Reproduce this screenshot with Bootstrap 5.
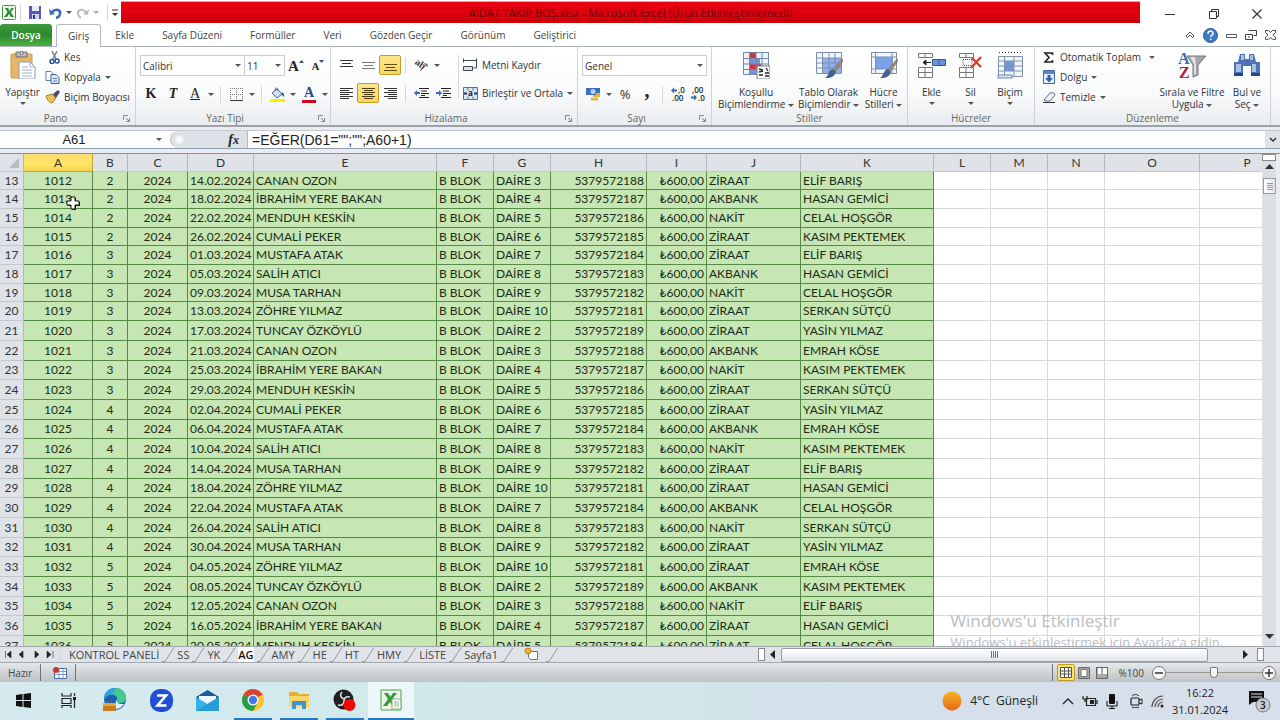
<!DOCTYPE html>
<html lang="tr">
<head>
<meta charset="utf-8">
<meta name="viewport" content="width=device-width, initial-scale=1">
<title>AİDAT TAKİP BOŞ.xlsx - Microsoft Excel</title>
<link href="https://cdn.jsdelivr.net/npm/bootstrap@5.3.0/dist/css/bootstrap.min.css" rel="stylesheet">
<style>
:root { --ui: "Open Sans", "Noto Sans", sans-serif; --sheet: Lato, "Noto Sans", sans-serif; }
body { font-family: var(--ui); font-size: 10px; line-height: 12px; color: #333; background: #fff; }
button, select, input { font: inherit; color: inherit; }
button { background: none; border: 0; padding: 0; }
svg { display: block; flex: none; }
.dd { display: inline-block; width: 0; height: 0; border: 3px solid transparent; border-top-color: #555; border-bottom: 0; vertical-align: middle; flex: none; }

/* title bar */
.titlebar { height: 24px; padding-top: 1px; }
.quick { width: 121px; padding-left: 2px; }
.titlebox { height: 22px; background: linear-gradient(#e8000f, #e00010 50%, #c80006); border-top: 1px solid #f3a0a5; color: #6d0008; font-size: 11px; }
.winbtns { width: 140px; padding: 2px 18px 0 24px; }

/* ribbon tabs */
.ribtabs { height: 23px; border-bottom: 1px solid #aeb4bb; }
.ribtabs a { color: #444; text-decoration: none; padding: 0 14px; height: 22px; line-height: 22px; }
.ribtabs a.filetab { background: linear-gradient(#3f9a3f, #2a8a2c 50%, #4bb045); color: #fff; font-weight: 600; width: 52px; padding: 0; text-align: center; border-radius: 3px 3px 0 0; margin-right: 4px; }
.ribtabs a.current { border: 1px solid #b6babf; border-bottom: 0; border-radius: 3px 3px 0 0; height: 23px; background: #fff; padding: 0 11px; }

/* ribbon */
.ribbon { display: grid; grid-template-columns: 136fr 195fr 247fr 134fr 196fr 127fr 236fr 9fr; height: 80px; background: linear-gradient(#fff, #fafbfc 55%, #e9edf0); border-bottom: 2px solid #9da2a8; }
.ribgroup { border-right: 1px solid #cfd3d7; height: 78px; min-width: 0; }
.ribbody { height: 65px; }
.riblabel { height: 13px; line-height: 13px; color: #666; position: relative; text-align: center; }
.launch { position: absolute; right: 5px; top: 3px; }
.big { width: 56px; padding-top: 4px; text-align: center; white-space: nowrap; display: flex; flex-direction: column; align-items: center; }
.big svg { margin-bottom: 7px; }
.smallcmd { display: flex; align-items: center; gap: 4px; height: 20px; white-space: nowrap; }
.ico { width: 22px; height: 20px; display: flex; align-items: center; justify-content: center; flex: none; }
.ico.on { background: linear-gradient(#fde58c, #fbd75a); border: 1px solid #c29b29; border-radius: 2px; }
.arrowbtn { width: 10px; height: 20px; display: flex; align-items: center; justify-content: center; flex: none; }
.vsep { width: 1px; height: 17px; background: #d5d8db; flex: none; }
.combo { height: 21px; border: 1px solid #c9cdd2; background: #fff url("data:image/svg+xml,%3Csvg xmlns='http://www.w3.org/2000/svg' width='6' height='3'%3E%3Cpath d='M0 0h6L3 3z' fill='%23555'/%3E%3C/svg%3E") no-repeat right 3px center; appearance: none; padding: 0 2px; border-radius: 0; }
.serif { font-family: "Liberation Serif", serif; font-weight: 700; font-size: 14px; color: #222; }

/* formula bar */
.formula { height: 26px; background: #e9edf1; padding: 3px 0 4px; }
.formula .strip { height: 19px; border-bottom: 1px solid #8fa1b0; border-top: 1px solid #c4c9cf; background: #fff; }
.formula input { border: 0; background: #fff; font-family: "Liberation Sans", Arial, sans-serif; font-size: 14px; color: #222; height: 17px; padding: 0; outline: 0; }
.formula input.namebox { font-size: 13px; width: 148px; }
.fxbox { width: 78px; background: #dde1e6; border: 1px solid #b5bac0; border-width: 0 1px 0 1px; border-radius: 9px 0 0 9px; height: 17px; }

/* sheet */
.sheetwrap { min-height: 0; border-top: 1px solid #8b9097; background: #dfe3e8; }
.gridview { position: relative; overflow: hidden; background: #fff; min-width: 0; }
.cells { table-layout: fixed; width: 1295px; border-collapse: separate; border-spacing: 0; font-family: var(--sheet); font-size: 12px; line-height: 16px; color: #1d2b17; }
.cells th { font-weight: 400; text-align: center; background: #dfe3e8; color: #333; border-right: 1px solid #b3b8be; border-bottom: 1px solid #c3c8ce; padding: 0; }
.cells thead th { height: 18px; }
.cells thead th.sel { background: linear-gradient(#f9dc74, #ffe566 60%, #f7d14f); border-color: #c8a136; }
.cells td { padding: 0 2px; border-right: 1px solid #d6d8da; border-bottom: 1px solid #d6d8da; white-space: nowrap; overflow: hidden; }
.cells td.fill { background: #c6e6b3; border-color: #558b46; }
.cells tbody tr { height: 19px; }
.cells tbody tr:nth-child(3n+1) { height: 18px; }
.cells tbody tr:nth-child(n+9) { height: 20px; }
.cells tbody tr:nth-child(3n+11) { height: 19px; }
.cells td.hascursor { position: relative; overflow: visible; }
.hascursor svg { position: absolute; left: 42px; top: 6px; }
.watermark { position: absolute; right: 32px; bottom: -5px; width: 280px; color: #b4b7b9; opacity: .9; white-space: nowrap; pointer-events: none; }
.watermark .wm1 { font-size: 17px; line-height: 24px; }
.watermark .wm2 { font-size: 13px; line-height: 18px; }
.vscroll { width: 18px; background: #dbe0e5; border-right: 4px solid #e9edf1; }
.vthumb { width: 13px; height: 16px; border: 1px solid #969ca3; background: linear-gradient(90deg, #fff, #e3e6ea); }

/* sheet tabs */
.sheettabs { height: 17px; background: #e0e4e9; border-top: 1px solid #a3a8ae; border-bottom: 1px solid #a3a8ae; font-size: 11px; color: #444; }
.sheettabs a { color: #444; text-decoration: none; line-height: 15px; height: 15px; white-space: nowrap; }
.sheettabs a.current { background: #fff; color: #111; font-weight: 600; }
.hscroll { width: 522px; height: 15px; }
.hthumb { width: 427px; height: 14px; border: 1px solid #969ca3; background: linear-gradient(#fff, #e3e6ea); border-radius: 2px; }
.splitgrip { width: 7px; height: 13px; border: 1px solid #888; background: #fff; }

/* status bar */
.status { height: 19px; background: linear-gradient(#e6e9eb, #d3d6d9 45%, #bfc3c6); color: #444; }
.status .on { background: #fbdf72; border: 1px solid #c49a2b; border-radius: 2px; }
.zoom { appearance: none; width: 96px; height: 15px; background: linear-gradient(#999, #999) no-repeat center / 100% 1px; }
.zoom::-webkit-slider-thumb { appearance: none; width: 8px; height: 11px; background: #f6f6f6; border: 1px solid #777; border-radius: 1px 1px 4px 4px; }
.round { width: 14px; height: 14px; border: 1px solid #777; border-radius: 50%; background: #f7f7f7; display: flex; align-items: center; justify-content: center; }

/* taskbar */
.taskbar { height: 38px; background: linear-gradient(90deg, #d4eaef, #d2e9ec 35%, #d4e0ea 70%, #d7dfeb); color: #222; }
.app { width: 46px; height: 38px; display: flex; align-items: center; justify-content: center; border-bottom: 2px solid transparent; position: relative; }
.app.open::after { content: ""; position: absolute; left: 4px; right: 4px; bottom: -2px; height: 2px; background: #2478c0; }
.app.front { background: #edf6f8; }
.app.front::after { left: 0; right: 0; }
.weather { font-size: 12px; }
.clock { width: 64px; font-size: 11px; line-height: 17px; text-align: center; }
</style>
</head>
<body class="d-flex flex-column vh-100 overflow-hidden">

<header>
  <div class="titlebar d-flex">
    <div class="quick d-flex align-items-center">
      <svg width="14" height="15" viewBox="0 0 14 15"><rect x=".5" y=".5" width="13" height="14" rx="1" fill="#eaf6e6" stroke="#3d9a43"/><path d="M3 3h3l1.500 3L9.500 3H12L8.800 7.300 12 12H9L7 9l-2 3H2l3.500-4.700z" fill="#2b8a33"/></svg>
      <span class="vsep ms-1 me-2"></span>
      <button aria-label="Kaydet"><svg width="12" height="13" viewBox="0 0 12 13"><path d="M0 0h12v13H0z" fill="#5a57b5"/><path d="M3 0h7v5H3z" fill="#e9eefa"/><path d="M3 8h7v5H3z" fill="#cfd6ef"/><path d="M4 9h2v4H4z" fill="#34318c"/></svg></button>
      <button class="ms-2" aria-label="Geri Al"><svg width="13" height="12" viewBox="0 0 13 12"><path d="M3 5c4-4 9-2 8 2-.4 2-2 3.500-4 4" fill="none" stroke="#3767b5" stroke-width="2.500"/><path d="M0 2l1 6 5-1z" fill="#3767b5"/></svg></button>
      <span class="dd ms-1 me-1"></span>
      <button aria-label="Yinele"><svg width="13" height="12" viewBox="0 0 13 12"><path d="M10 5C6 1 1 3 2 7c.4 2 2 3.500 3 4" fill="none" stroke="#b9bdc2" stroke-width="2"/><path d="M13 2l-1 6-5-1z" fill="#b9bdc2"/></svg></button>
      <span class="dd ms-1 me-2 opacity-50"></span>
      <span class="vsep me-1"></span>
      <svg width="6" height="8"><path d="M0 1h6" stroke="#333"/><path d="M0 4h6L3 7z" fill="#333"/></svg>
    </div>
    <div class="titlebox flex-grow-1 d-flex align-items-center justify-content-center"><span>AİDAT TAKİP BOŞ.xlsx - Microsoft Excel (Ürün Etkinleştirilemedi)</span></div>
    <div class="winbtns d-flex justify-content-between align-items-center">
      <button aria-label="Simge durumu"><svg width="12" height="10"><path d="M1 5.500h10" stroke="#333"/></svg></button>
      <button aria-label="Geri yükle"><svg width="10" height="10"><path d="M.5 2.500h7v7h-7zM2.500 2.500v-2h7v7h-2" fill="none" stroke="#333"/></svg></button>
      <button aria-label="Kapat"><svg width="10" height="10"><path d="M.5.500l9 9m0-9l-9 9" stroke="#333" stroke-width="1.200"/></svg></button>
    </div>
  </div>

  <nav class="ribtabs d-flex">
    <a href="#" class="filetab">Dosya</a>
    <a href="#" class="current">Giriş</a>
    <a href="#">Ekle</a><a href="#">Sayfa Düzeni</a><a href="#">Formüller</a><a href="#">Veri</a><a href="#">Gözden Geçir</a><a href="#">Görünüm</a><a href="#">Geliştirici</a>
    <div class="ms-auto d-flex align-items-center gap-2 pe-1">
      <svg width="10" height="8" viewBox="0 0 10 8"><path d="M1 5l4-4 4 4-1.500 1.500L5 4 2.500 6.500z" fill="#fff" stroke="#555"/></svg>
      <svg width="15" height="15" viewBox="0 0 15 15"><circle cx="7.500" cy="7.500" r="7" fill="#3f79c4" stroke="#2a5a9c"/><path d="M5 6c0-4 5-3.500 5-.6 0 1.700-2.300 1.800-2.300 3.600M7.700 10.500v1.600" fill="none" stroke="#fff" stroke-width="1.500"/></svg>
      <svg width="11" height="8"><path d="M.5 3.500h10v3H.5z" fill="#fff" stroke="#555"/></svg>
      <svg width="12" height="11"><path d="M3.500.500h8v5h-3M.5 4.500h7v5h-7zM3 7h2" fill="none" stroke="#444"/></svg>
      <svg width="11" height="10"><path d="M.5.500h3l2 2 2-2h3v2L8 4.800l2.500 2.500v2h-3l-2-2-2 2h-3v-2L3 4.800.5 2.500z" fill="#fff" stroke="#444"/></svg>
    </div>
  </nav>

  <div class="ribbon">
    <section class="ribgroup">
      <div class="ribbody d-flex">
        <button class="big" style="width:45px">
          <svg width="26" height="28" viewBox="0 0 26 28"><rect x="1" y="3" width="21" height="24" rx="1" fill="#e6b866" stroke="#c99a4a"/><path d="M6 1h11v5H6z" fill="#b9babd" stroke="#6c6f73"/><circle cx="11.500" cy="2" r="1.500" fill="#fff" stroke="#666"/><path d="M9 11h11l5 5v12H9z" fill="#fff" stroke="#8c9cb5"/><path d="M20 11v5h5M12 16h6M12 19h10M12 22h10M12 25h10" fill="none" stroke="#9fb2cf"/></svg>
          <span>Yapıştır</span><span class="dd mt-1"></span></button>
        <div>
          <button class="smallcmd"><svg class="ms-1" width="11" height="13" viewBox="0 0 11 13"><path d="M3 0l4 8M8 0L4 8" stroke="#6d7f9d" stroke-width="1.500"/><circle cx="3" cy="10.500" r="2" fill="none" stroke="#27509e" stroke-width="1.500"/><circle cx="8" cy="10" r="2" fill="none" stroke="#27509e" stroke-width="1.500"/></svg>Kes</button>
          <button class="smallcmd"><svg width="15" height="13" viewBox="0 0 15 13"><path d="M1 .5h5l3 3v6H1z" fill="#fff" stroke="#5c7db5"/><path d="M6 3.500h5l3 3v6H6z" fill="#dce8fa" stroke="#3b62a8"/><path d="M8 7.500h4M8 10h4" stroke="#5c7db5"/></svg>Kopyala <span class="dd"></span></button>
          <button class="smallcmd"><svg width="15" height="14" viewBox="0 0 15 14"><path d="M1 6l6-2 4 4-4 5c-2 0-5-3-6-7z" fill="#edc459" stroke="#a17a2a"/><path d="M8 4l5-4 2 2-4 6z" fill="#444c6c"/></svg>Biçim Boyacısı</button>
        </div>
      </div>
      <div class="riblabel pe-4">Pano<svg class="launch" width="7" height="7"><path d="M.5 5V.500H5M3 3l3 3M6.500 3v3.500H3" fill="none" stroke="#888"/></svg></div>
    </section>

    <section class="ribgroup">
      <div class="ribbody pt-2 ps-1">
        <div class="d-flex align-items-center">
          <select class="combo" style="width:105px" aria-label="Yazı tipi"><option>Calibri</option></select>
          <select class="combo border-start-0" style="width:40px" aria-label="Punto"><option>11</option></select>
          <button class="ico serif" aria-label="Büyüt"><span style="font-size:15px">A</span><svg class="mb-2" width="5" height="4"><path d="M0 3h5L2.500 0z" fill="#334a7a"/></svg></button>
          <button class="ico serif" aria-label="Küçült"><span style="font-size:11px">A</span><svg class="mb-2" width="5" height="4"><path d="M0 0h5L2.500 3z" fill="#334a7a"/></svg></button>
        </div>
        <div class="d-flex align-items-center mt-2">
          <button class="ico serif">K</button><button class="ico serif fst-italic">T</button><button class="ico serif fw-normal"><u>A</u></button><button class="arrowbtn"><span class="dd"></span></button>
          <span class="vsep mx-1"></span>
          <button class="ico" aria-label="Kenarlık"><svg width="13" height="13"><path d="M0 .5h13M0 6.500h13M.5 0v13M6.500 0v13M12.500 0v13" stroke="#777" stroke-dasharray="1 1"/><path d="M0 12.500h13" stroke="#333"/></svg></button><button class="arrowbtn"><span class="dd"></span></button>
          <span class="vsep mx-1"></span>
          <button class="ico" aria-label="Dolgu rengi"><svg width="15" height="15" viewBox="0 0 15 15"><path d="M2 6l5-4 5 5-5 4z" fill="#d7e3f4" stroke="#41639a"/><path d="M5 4c0-4 3-4 3 0" fill="none" stroke="#41639a"/><path d="M12 5c2 1 2.500 3 2 5l-2-2z" fill="#2a5aa6"/><path d="M0 12h15v3H0z" fill="#fcf000"/></svg></button><button class="arrowbtn"><span class="dd"></span></button>
          <button class="ico flex-column" aria-label="Yazı rengi"><span class="serif lh-1" style="color:#2b467f">A</span><svg width="14" height="3"><path d="M0 0h14v3H0z" fill="#d0021b"/></svg></button><button class="arrowbtn"><span class="dd"></span></button>
        </div>
      </div>
      <div class="riblabel pe-3">Yazı Tipi<svg class="launch" width="7" height="7"><path d="M.5 5V.500H5M3 3l3 3M6.500 3v3.500H3" fill="none" stroke="#888"/></svg></div>
    </section>

    <section class="ribgroup">
      <div class="ribbody d-flex pt-2 ps-1">
        <div class="d-flex flex-column gap-2">
          <div class="d-flex align-items-center">
            <button class="ico" aria-label="Üst"><svg width="13" height="12"><path d="M0 1.500h13M2 4.500h9M0 7.500h13" stroke="#333"/></svg></button>
            <button class="ico" aria-label="Orta"><svg width="13" height="12"><path d="M0 3.500h13M2 6.500h9M0 9.500h13" stroke="#777"/></svg></button>
            <button class="ico on" aria-label="Alt"><svg width="13" height="12"><path d="M0 5.500h13M2 8.500h9M0 11.500h13" stroke="#5d4b15"/></svg></button>
            <span class="vsep mx-1"></span>
            <button class="ico" aria-label="Yönlendirme"><svg width="15" height="14" viewBox="0 0 15 14"><text x="0" y="8" font-size="10" font-weight="700" font-family="Liberation Serif" transform="rotate(35 4 7)" fill="#333">ab</text><path d="M6 13l7-7M13 6v3M13 6h-3" stroke="#555" fill="none"/></svg></button><button class="arrowbtn"><span class="dd"></span></button>
          </div>
          <div class="d-flex align-items-center">
            <button class="ico" aria-label="Sola"><svg width="13" height="12"><path d="M0 1.500h13M0 3.500h9M0 5.500h13M0 7.500h9M0 9.500h13M0 11.500h9" stroke="#333"/></svg></button>
            <button class="ico on" aria-label="Ortala"><svg width="13" height="12"><path d="M0 1.500h13M2 3.500h9M0 5.500h13M2 7.500h9M0 9.500h13M2 11.500h9" stroke="#4a3c10"/></svg></button>
            <button class="ico" aria-label="Sağa"><svg width="13" height="12"><path d="M0 1.500h13M4 3.500h9M0 5.500h13M4 7.500h9M0 9.500h13M4 11.500h9" stroke="#333"/></svg></button>
            <span class="vsep mx-1"></span>
            <button class="ico" aria-label="Girintiyi azalt"><svg width="15" height="12"><path d="M5 1.500h10M7 4h6M7 6.500h8M7 8.500h4M5 10.500h10" stroke="#222"/><path d="M0 6l3-3v2h3v2H3v2z" fill="#3567bb"/></svg></button>
            <button class="ico" aria-label="Girintiyi artır"><svg width="15" height="12"><path d="M5 1.500h10M7 4h6M7 6.500h8M7 8.500h4M5 10.500h10" stroke="#222"/><path d="M6 6L3 3v2H0v2h3v2z" fill="#3567bb"/></svg></button>
          </div>
        </div>
        <span class="vsep h-75 ms-1 me-1"></span>
        <div class="d-flex flex-column gap-2">
          <button class="smallcmd"><svg width="15" height="14"><path d="M.5.500v4M0 2.500h13M13.500.500v4M.5 8.500h9v4h-9z" stroke="#444" fill="#dbe6f5"/><path d="M13.500 4v6h-3" stroke="#2a4a8a" fill="none"/></svg>Metni Kaydır</button>
          <button class="smallcmd"><svg width="15" height="13"><path d="M.5.500h14v12H.5zM5 .5v3M10 .5v3M5 9.500v3M10 9.500v3" stroke="#56708f" fill="#dbe6f5"/><path d="M1 6.500h3M11 6.500h3" stroke="#17346e" stroke-width="2"/><text x="5" y="9" font-size="8" font-weight="700" fill="#222">a</text></svg>Birleştir ve Ortala <span class="dd"></span></button>
        </div>
      </div>
      <div class="riblabel pe-3">Hizalama<svg class="launch" width="7" height="7"><path d="M.5 5V.500H5M3 3l3 3M6.500 3v3.500H3" fill="none" stroke="#888"/></svg></div>
    </section>

    <section class="ribgroup">
      <div class="ribbody pt-2 px-1">
        <select class="combo w-100" aria-label="Sayı biçimi"><option>Genel</option></select>
        <div class="d-flex align-items-center mt-2">
          <button class="ico" aria-label="Para birimi"><svg width="15" height="14" viewBox="0 0 15 14"><path d="M0 1h14v7H0z" fill="#3c6fbe"/><circle cx="7" cy="4.500" r="2.500" fill="#b9d1f0"/><path d="M7 8h7v2H7zM5 10.500h7v3H5zM10 6h4v2h-4z" fill="#e3b44a"/></svg></button><button class="arrowbtn"><span class="dd"></span></button>
          <button class="ico" style="font-size:13px">%</button><button class="ico serif"><span class="pb-2" style="font-size:20px">,</span></button>
          <span class="vsep mx-1"></span>
          <button class="ico" aria-label="Ondalık artır"><svg width="15" height="14" viewBox="0 0 15 14"><text x="7" y="6" font-size="8" font-weight="600" fill="#222">,0</text><text x="1" y="14" font-size="8" font-weight="600" fill="#222">,00</text><path d="M0 3.500l3-3v2h3v2H3v2z" fill="#3567bb"/></svg></button>
          <button class="ico" style="width:18px" aria-label="Ondalık azalt"><svg width="15" height="14" viewBox="0 0 15 14"><text x="1" y="6" font-size="8" font-weight="600" fill="#222">,00</text><text x="7" y="14" font-size="8" font-weight="600" fill="#222">,0</text><path d="M6 10.500l-3-3v2H0v2h3v2z" fill="#3567bb"/></svg></button>
        </div>
      </div>
      <div class="riblabel pe-3">Sayı<svg class="launch" width="7" height="7"><path d="M.5 5V.500H5M3 3l3 3M6.500 3v3.500H3" fill="none" stroke="#888"/></svg></div>
    </section>

    <section class="ribgroup">
      <div class="ribbody d-flex ps-1">
        <button class="big" style="width:80px">
          <svg width="28" height="28" viewBox="0 0 28 28"><path d="M1 2h25v22H1z" fill="#eef3fb"/><path d="M8 2h6v5H8zM8 13h11v6H8z" fill="#d8343c"/><path d="M8 7h10v6H8zM8 19h6v5H8z" fill="#6f94dd"/><path d="M1.500 1.500h25v22h-25zM1 7.500h25M1 13h25M1 18.500h25M7.500 2v22M14 2v22M20 2v22" fill="none" stroke="#7388a8"/><path d="M15 15h13v13H15z" fill="#fff" stroke="#777"/><path d="M17 18l4 1M17 21l4-1M17 24h4M24 17l2 3M23 22h4M23 25h4" stroke="#222" stroke-width="1.300"/></svg>
          <span>Koşullu</span><span>Biçimlendirme <span class="dd"></span></span></button>
        <button class="big" style="width:65px">
          <svg width="28" height="28" viewBox="0 0 28 28"><path d="M1 2h25v21H1z" fill="#f3f7fd"/><path d="M8 7h18v16H8z" fill="#8fb0ea"/><path d="M1.500 1.500h25v21h-25zM1 7h25M1 12h25M1 17h25M7.500 2v21M14 2v21M20 2v21" fill="none" stroke="#7b90ae"/><path d="M27 8L18 19l2 2 8-11z" fill="#a98a6e" stroke="#66584b" stroke-width=".6"/><path d="M18 18l3 3c-2 6-7 6-11 6 4-2 3-8 8-9z" fill="#44628f"/></svg>
          <span>Tablo Olarak</span><span>Biçimlendir <span class="dd"></span></span></button>
        <button class="big" style="width:45px">
          <svg width="28" height="28" viewBox="0 0 28 28"><path d="M1 2h25v21H1z" fill="#f3f7fd"/><path d="M6 6h17v12H6z" fill="#7ba2ea"/><path d="M1.500 1.500h25v21h-25zM1 6h25M1 18h25M5.500 2v21M22 2v21" fill="none" stroke="#7b90ae"/><path d="M27 8L18 19l2 2 8-11z" fill="#a98a6e" stroke="#66584b" stroke-width=".6"/><path d="M18 18l3 3c-2 6-7 6-11 6 4-2 3-8 8-9z" fill="#44628f"/></svg>
          <span>Hücre</span><span>Stilleri <span class="dd"></span></span></button>
      </div>
      <div class="riblabel">Stiller</div>
    </section>

    <section class="ribgroup">
      <div class="ribbody d-flex ps-1">
        <button class="big" style="width:39px">
          <svg width="29" height="28" viewBox="0 0 29 28"><path d="M1.500 2.500h14v4h-14zM8 2v5M1.500 16.500h14v10h-14zM8 17v9M2 21.500h13" fill="#fff" stroke="#777"/><path d="M15.500 8.500h13v6h-13zM22 8.500v6" fill="#6c93de" stroke="#35588f"/><path d="M6 11.500h8M6 11.500l3-2.500v5z" stroke="#222" fill="#222"/></svg>
          <span>Ekle</span><span class="dd mt-1"></span></button>
        <button class="big" style="width:39px">
          <svg width="25" height="28" viewBox="0 0 25 28"><path d="M1.500 2.500h14v4h-14zM8 2v5M1.500 16.500h14v10h-14zM8 17v9M2 21.500h13" fill="#fff" stroke="#777"/><path d="M5 8.500h9v6H5z" fill="none" stroke="#444" stroke-dasharray="1 1"/><path d="M14 7l9 9M23 6l-10 11" stroke="#dc3526" stroke-width="2.200"/></svg>
          <span>Sil</span><span class="dd mt-1"></span></button>
        <button class="big" style="width:40px">
          <svg width="28" height="28" viewBox="0 0 28 28"><path d="M2.500 5.500h24v20h-24z" fill="#f3f7fd" stroke="#8192aa"/><path d="M9 10h9v10H9z" fill="#6f96df"/><path d="M2 10h25M2 15h25M2 20h25M8.500 5v20M18 5v20" stroke="#8192aa"/><path d="M3 1.500h24" stroke="#222" stroke-dasharray="1 2"/><path d="M2 24h14v3H2z" fill="#dde6f4" stroke="#6c84a8"/></svg>
          <span>Biçim</span><span class="dd mt-1"></span></button>
      </div>
      <div class="riblabel">Hücreler</div>
    </section>

    <section class="ribgroup">
      <div class="ribbody d-flex ps-2">
        <div style="width:115px">
          <button class="smallcmd"><svg width="13" height="11"><path d="M9.500 3V1H2l4 4.500L2 10h7.500V8" fill="none" stroke="#222" stroke-width="1.600"/></svg>Otomatik Toplam <span class="dd ms-1"></span></button>
          <button class="smallcmd"><svg width="13" height="14"><path d="M.5.500h11v13H.5z" fill="#e7effb" stroke="#466aa9"/><path d="M1 1h10v3H1z" fill="#5b86cd"/><path d="M4.500 5h3v3H10l-4 4.500L2 8h2.500z" fill="#2e63bb"/></svg>Dolgu <span class="dd"></span></button>
          <button class="smallcmd"><svg width="13" height="12"><path d="M1 9l6-7c1-1 5 0 5 2L7 10H2z" fill="#eef2fa" stroke="#5a6785"/><path d="M0 11.500h12" stroke="#333"/></svg>Temizle <span class="dd"></span></button>
        </div>
        <button class="big" style="width:68px">
          <svg width="28" height="28" viewBox="0 0 28 28"><text x="0" y="13" font-family="Liberation Serif" font-size="16" font-weight="700" fill="#3d6ab0">A</text><text x="1" y="27" font-family="Liberation Serif" font-size="16" font-weight="700" fill="#b01e38">Z</text><path d="M9 5h19l-8 9v10l-5 2V14z" fill="#a4a8ad" stroke="#777"/><path d="M12 6h5l1 8v9l-2 1V13z" fill="#dfe1e4"/></svg>
          <span>Sırala ve Filtre</span><span>Uygula <span class="dd"></span></span></button>
        <button class="big" style="width:42px">
          <svg width="28" height="28" viewBox="0 0 28 28"><path d="M7 3h5v5h4V3h5l2 8h4v13h-9v-9h-8v9H1V11h4z" fill="#5073b5"/><path d="M3 13h5v8H3zM19 13h4v8h-4zM8 4h3v5H8zM17 4h3v5h-3z" fill="#a9c1ea"/><path d="M1 22h9v3H1zM18 22h9v3h-9z" fill="#2b4680"/></svg>
          <span>Bul ve</span><span>Seç <span class="dd"></span></span></button>
      </div>
      <div class="riblabel">Düzenleme</div>
    </section>
  </div>

  <div class="formula">
    <div class="strip d-flex align-items-center">
      <input class="namebox text-center" value="A61" aria-label="Ad kutusu">
      <span class="dd mx-2"></span>
      <div class="fxbox d-flex align-items-center justify-content-between ps-1 pe-2">
        <span class="rounded-circle bg-light border border-secondary-subtle" style="width:9px;height:9px"></span>
        <span class="serif fst-italic">f<small>x</small></span>
      </div>
      <input class="flex-grow-1 ps-1" value='=EĞER(D61="";"";A60+1)' aria-label="Formül">
      <button class="ico border-start h-100" style="width:15px;background:#dfe3e8" aria-label="Genişlet"><svg width="8" height="6"><path d="M1 1l3 3 3-3" fill="none" stroke="#333" stroke-width="1.500"/></svg></button>
    </div>
  </div>
</header>

<main class="sheetwrap d-flex flex-grow-1">
  <div class="gridview flex-grow-1">
    <table class="cells">
      <colgroup id="cols"></colgroup>
      <thead><tr id="heads"></tr></thead>
      <tbody id="rows"></tbody>
    </table>
    <div class="watermark"><div class="wm1">Windows'u Etkinleştir</div><div class="wm2">Windows'u etkinleştirmek için Ayarlar'a gidin.</div></div>
  </div>
  <div class="vscroll d-flex flex-column align-items-center">
    <span class="splitgrip w-100" style="height:7px"></span>
    <svg class="mb-2" width="9" height="9"><path d="M0 8h9L4.500 3z" fill="#333"/></svg>
    <div class="vthumb"><svg width="11" height="13"><path d="M3 4.500h6M3 6.500h6M3 8.500h6M3 10.500h6" stroke="#999"/></svg></div>
    <svg class="mt-auto mb-1" width="9" height="9"><path d="M0 1h9L4.500 6z" fill="#333"/></svg>
  </div>
</main>

<footer>
  <div class="sheettabs d-flex">
    <div class="d-flex align-items-center ps-1">
      <svg width="56" height="9"><path d="M1.500 1v7M7 1v7L3 4.500zM19 1v7l-4-3.500zM31 1v7l4-3.500zM43 1v7l4-3.500zM49 1v7" fill="#222" stroke="#222" stroke-width=".6"/></svg>
    </div>
    <nav class="d-flex" id="tabs"></nav>
    <div class="hscroll d-flex align-items-center ms-auto">
      <span class="splitgrip"></span>
      <svg class="mx-1" width="8" height="9"><path d="M6 0v9L1 4.500z" fill="#222"/></svg>
      <div class="hthumb d-flex align-items-center justify-content-center"><svg width="8" height="7"><path d="M.5 0v7M2.500 0v7M4.500 0v7M6.500 0v7" stroke="#777"/></svg></div>
      <svg class="ms-auto me-2" width="6" height="9"><path d="M0 0v9l5-4.500z" fill="#222"/></svg>
      <span class="splitgrip me-3"></span>
    </div>
  </div>
  <div class="status d-flex align-items-center">
    <span class="ps-2 pe-1">Hazır</span>
    <span class="vsep mx-1 bg-secondary"></span>
    <svg class="ms-2 me-1" width="14" height="12"><path d="M1.500 1.500h12v10h-12z" fill="#fff" stroke="#4a6fb0"/><path d="M2 4.500h11M2 7.500h11M6 2v9M10 2v9" stroke="#7e9ccc"/><circle cx="3" cy="3" r="3" fill="#c8372d"/></svg>
    <span class="vsep ms-1 bg-secondary"></span>
    <div class="ms-auto d-flex align-items-center pe-1">
      <span class="vsep bg-secondary me-1"></span>
      <button class="ico on" style="width:18px;height:17px" aria-label="Normal"><svg width="12" height="11"><path d="M.5.500h11v10H.5zM0 4h12M0 7h12M4.500 0v11M8.500 0v11" fill="#fff" stroke="#555"/></svg></button>
      <button class="ico" style="width:18px" aria-label="Sayfa düzeni"><svg width="12" height="12"><path d="M.5.500h11v11H.5z" fill="#aaa" stroke="#666"/><path d="M3 2.500h6v7H3z" fill="#fff" stroke="#777"/></svg></button>
      <button class="ico" style="width:18px" aria-label="Sayfa sonu"><svg width="12" height="12"><path d="M.5.500h11v11H.5z" fill="#aaa" stroke="#666"/><path d="M2 1h3v6H2zM7 1h4v6H7z" fill="#fff"/></svg></button>
      <span class="mx-2">%100</span>
      <button class="round" aria-label="Uzaklaştır"><svg width="8" height="8"><path d="M0 4h8" stroke="#333" stroke-width="1.500"/></svg></button>
      <input class="zoom" type="range" min="0" max="100" value="50" aria-label="Yakınlaştırma">
      <button class="round" aria-label="Yakınlaştır"><svg width="8" height="8"><path d="M0 4h8M4 0v8" stroke="#333" stroke-width="1.500"/></svg></button>
    </div>
  </div>

  <div class="taskbar d-flex align-items-center">
    <button class="app" aria-label="Başlat"><svg width="15" height="15" viewBox="0 0 15 15"><path d="M0 2l6.500-1v6H0zM7.500.900L15 0v7H7.500zM0 8h6.500v6L0 13zM7.500 8H15v7l-7.500-1z" fill="#111"/></svg></button>
    <button class="app" aria-label="Görev görünümü"><svg width="16" height="15" viewBox="0 0 16 15"><path d="M1 0v3h9V0M1 5.500h9v5H1zM1 15v-2.500h9V15M13.500 0v3M13.500 7v8" fill="none" stroke="#222" stroke-width="1.200"/><path d="M12 4h3v3h-3z" fill="#222"/></svg></button>
    <button class="app" aria-label="Edge"><svg width="24" height="24" viewBox="0 0 24 24"><circle cx="12" cy="11" r="11" fill="#1b62b4"/><path d="M1 11C1 4 6 0 12 0s11 4 11 10c0 3-3 5-6 5-3.500 0-4-1.500-3-3 1-2.500-1-5-5-5S2 9 1 12z" fill="#2ea3dc"/><path d="M12 0c7 0 11 5 11 10 0 3-3 5-6 5-3.500 0-4-1.500-3-3 1-3-1-6-5-6C11 3 12 2 12 0z" fill="#4ac98c"/><path d="M14 12c-.5 3 2 4.500 7 4-2 3-5 5-9 5 0-4 0-7 2-9z" fill="#e2f2f4"/><path d="M0 15h13v8H0z" fill="#c87c22"/><path d="M0 15h13v3H0z" fill="#e7a63c"/><path d="M4.500 15v-2h4v2" fill="none" stroke="#8d5312"/></svg></button>
    <button class="app" aria-label="Zoom"><svg width="23" height="23" viewBox="0 0 23 23"><rect width="23" height="23" rx="10" fill="#1d4fd7"/><path d="M7 6.500h9L7.500 16.500H16.500" fill="none" stroke="#fff" stroke-width="2.600"/></svg></button>
    <button class="app" aria-label="Posta"><svg width="23" height="21" viewBox="0 0 23 21"><path d="M0 7l11.500-7L23 7v14H0z" fill="#1b5a9c"/><path d="M3 6h17v8H3z" fill="#eef6fb"/><path d="M0 7l11.500 7L23 7v14H0z" fill="#35b2e8"/><path d="M0 21L23 7v14z" fill="#2a9bd9"/></svg></button>
    <button class="app open" aria-label="Chrome"><svg width="22" height="22" viewBox="0 0 22 22"><circle cx="11" cy="11" r="11" fill="#f8c62c"/><path d="M11 11L1.500 5.500A11 11 0 0 1 20.500 5.500z" fill="#dd3f33"/><path d="M11 11L1.500 5.500A11 11 0 0 0 11 22l4.800-8.500z" fill="#259b4c"/><path d="M11 6h9.800L20 5H11z" fill="#dd3f33"/><circle cx="11" cy="11" r="5.500" fill="#fff"/><circle cx="11" cy="11" r="4.200" fill="#3e7de8"/></svg></button>
    <button class="app open" aria-label="Dosya gezgini"><svg width="22" height="18" viewBox="0 0 22 18"><path d="M1 1h8l2 2h10v13H1z" fill="#e6ac37"/><path d="M1 5h20v11H1z" fill="#fbd568"/><path d="M4 10h14v8h-4v-4H8v4H4z" fill="#4294cc"/></svg></button>
    <button class="app open" aria-label="OBS"><svg width="24" height="23" viewBox="0 0 24 23"><circle cx="10.500" cy="10.500" r="10" fill="#1f1f22"/><path d="M9 3c-3 3-1 6 2 7M17 8c-4-1-6 1-6 4M5 16c4 1 6-1 6-4" fill="none" stroke="#d8d8d8" stroke-width="1.700"/><circle cx="16.500" cy="16" r="6" fill="#f00808"/></svg></button>
    <button class="app open front" aria-label="Excel"><svg width="22" height="22" viewBox="0 0 22 22"><path d="M1 1h20v20H1z" fill="#eaf5e6" stroke="#4fa04e"/><path d="M4 4h4l2.500 4L13 4h4l-4.500 6 3 4-3 3L10 13l-3 4H3l5-7z" fill="#3d9540"/><path d="M12 10h7l2 2v8h-9z" fill="#fff" stroke="#7cb27a"/><path d="M14 13h5M14 15h5M14 17h5" stroke="#8db88a"/></svg></button>
    <div class="ms-auto d-flex align-items-center">
      <svg width="20" height="20"><defs><linearGradient id="sun" x2="0" y2="1"><stop stop-color="#f5b223"/><stop offset="1" stop-color="#e86a1b"/></linearGradient></defs><circle cx="10" cy="10" r="9.500" fill="url(#sun)"/></svg>
      <span class="weather ms-2 me-4">4°C &nbsp;Güneşli</span>
      <div class="d-flex align-items-center gap-2 me-1">
        <svg width="12" height="8"><path d="M1 7l5-5 5 5" fill="none" stroke="#222" stroke-width="1.300"/></svg>
        <svg width="16" height="12"><path d="M4.500 3.500h9v7h-9zM15 5v4M1 1v3h4V1M3 4v3" fill="none" stroke="#222" stroke-width="1.200"/><path d="M8 5h4v4H8z" fill="#222"/></svg>
        <svg width="12" height="15"><rect x="3" width="6" height="10" rx="1" fill="#111"/><path d="M1 7v5h10V7M6 12v3M3 14.500h6" fill="none" stroke="#111"/></svg>
        <svg class="ms-1" width="13" height="14"><rect x="1" y="4" width="8" height="7" rx="1" fill="none" stroke="#222" stroke-width="1.200"/><path d="M9 6l3-1v5L9 9M2 2c2-2 5-2 7 0M2 13c2 1 5 1 7 0" fill="none" stroke="#222"/></svg>
        <svg width="13" height="13"><path d="M1 12A11 11 0 0 1 12 1M4 12a8 8 0 0 1 8-8M7 12a5 5 0 0 1 5-5" fill="none" stroke="#555" stroke-width="1.200"/><circle cx="11" cy="11" r="1.500" fill="#222"/></svg>
      </div>
      <div class="clock">16:22<br>31.01.2024</div>
      <svg class="ms-3 me-2" width="24" height="24" viewBox="0 0 24 24"><path d="M1 2h15v11H5l-4 3z" fill="#111"/><path d="M3 5h11M3 8h11" stroke="#d7dfeb"/><circle cx="15" cy="16" r="7" fill="#c5ccd2" stroke="#777"/><text x="12" y="20" font-size="10" font-weight="600" fill="#222">3</text></svg>
    </div>
  </div>
</footer>

<script src="https://cdn.jsdelivr.net/npm/bootstrap@5.3.0/dist/js/bootstrap.bundle.min.js"></script>
<script>
const widths = [24, 69, 35, 60, 66, 183, 57, 57, 96, 60, 94, 133, 57, 57, 57, 95, 95];
document.getElementById('cols').innerHTML = widths.map(w => `<col style="width:${w}px">`).join('');
document.getElementById('heads').innerHTML =
  '<th><svg class="ms-auto me-1" width="10" height="10"><path d="M10 0v10H0z" fill="#b8bdc4"/></svg></th>' +
  [...'ABCDEFGHIJKLMNOP'].map((c, i) => `<th class="${i ? '' : 'sel'}">${c}</th>`).join('');

// month, date, name, flat number, bank, collector
const data = `2|14.02|CANAN OZON|3|ZİRAAT|ELİF BARIŞ
2|18.02|İBRAHİM YERE BAKAN|4|AKBANK|HASAN GEMİCİ
2|22.02|MENDUH KESKİN|5|NAKİT|CELAL HOŞGÖR
2|26.02|CUMALİ PEKER|6|ZİRAAT|KASIM PEKTEMEK
3|01.03|MUSTAFA ATAK|7|ZİRAAT|ELİF BARIŞ
3|05.03|SALİH ATICI|8|AKBANK|HASAN GEMİCİ
3|09.03|MUSA TARHAN|9|NAKİT|CELAL HOŞGÖR
3|13.03|ZÖHRE YILMAZ|10|ZİRAAT|SERKAN SÜTÇÜ
3|17.03|TUNCAY ÖZKÖYLÜ|2|ZİRAAT|YASİN YILMAZ
3|21.03|CANAN OZON|3|AKBANK|EMRAH KÖSE
3|25.03|İBRAHİM YERE BAKAN|4|NAKİT|KASIM PEKTEMEK
3|29.03|MENDUH KESKİN|5|ZİRAAT|SERKAN SÜTÇÜ
4|02.04|CUMALİ PEKER|6|ZİRAAT|YASİN YILMAZ
4|06.04|MUSTAFA ATAK|7|AKBANK|EMRAH KÖSE
4|10.04|SALİH ATICI|8|NAKİT|KASIM PEKTEMEK
4|14.04|MUSA TARHAN|9|ZİRAAT|ELİF BARIŞ
4|18.04|ZÖHRE YILMAZ|10|ZİRAAT|HASAN GEMİCİ
4|22.04|MUSTAFA ATAK|7|AKBANK|CELAL HOŞGÖR
4|26.04|SALİH ATICI|8|NAKİT|SERKAN SÜTÇÜ
4|30.04|MUSA TARHAN|9|ZİRAAT|YASİN YILMAZ
5|04.05|ZÖHRE YILMAZ|10|ZİRAAT|EMRAH KÖSE
5|08.05|TUNCAY ÖZKÖYLÜ|2|AKBANK|KASIM PEKTEMEK
5|12.05|CANAN OZON|3|NAKİT|ELİF BARIŞ
5|16.05|İBRAHİM YERE BAKAN|4|ZİRAAT|HASAN GEMİCİ
5|20.05|MENDUH KESKİN|5|ZİRAAT|CELAL HOŞGÖR`;
const cursor = '<svg width="15" height="15"><path d="M5 1h4v4h4v4H9v4H5V9H1V5h4z" transform="translate(1 1)" fill="#222"/><path d="M5 1h4v4h4v4H9v4H5V9H1V5h4z" fill="#fff" stroke="#111"/></svg>';
document.getElementById('rows').innerHTML = data.split('\n').map((line, i) => {
  const [month, date, name, flat, bank, who] = line.split('|');
  const phone = '53795721' + (flat === '10' ? 81 : flat === '2' ? 89 : 91 - flat);
  const f = (text, cls = '') => `<td class="fill ${cls}">${text}</td>`;
  return '<tr><th>' + (13 + i) + '</th>' +
    f((1012 + i) + (i === 1 ? cursor : ''), 'text-center' + (i === 1 ? ' hascursor' : '')) +
    f(month, 'text-center') + f('2024', 'text-center') + f(date + '.2024', 'text-end') + f(name) +
    f('B BLOK') + f('DAİRE ' + flat) + f(phone, 'text-end') + f('₺600,00', 'text-end') + f(bank) + f(who) +
    '<td></td>'.repeat(5) + '</tr>';
}).join('');

const slant = '<svg width="18" height="15"><path d="M3 14.500h3L15 .5" fill="none" stroke="#8f959c"/></svg>';
document.getElementById('tabs').innerHTML =
  '<span class="vsep me-2"></span>' +
  ['KONTROL PANELİ', 'SS', 'YK', 'AG', 'AMY', 'HE', 'HT', 'HMY', 'LİSTE', 'Sayfa1']
    .map(t => `<a href="#"${t === 'AG' ? ' class="current"' : ''}>${t}</a>${slant}`).join('') +
  '<svg class="ms-2 me-1" width="15" height="14"><path d="M4.500 4.500h9v8h-7l-2-2z" fill="#fff" stroke="#5c73a5"/><circle cx="4" cy="4" r="3" fill="#f1b12e" stroke="#c5811b"/></svg>' + slant;
</script>
</body>
</html>
